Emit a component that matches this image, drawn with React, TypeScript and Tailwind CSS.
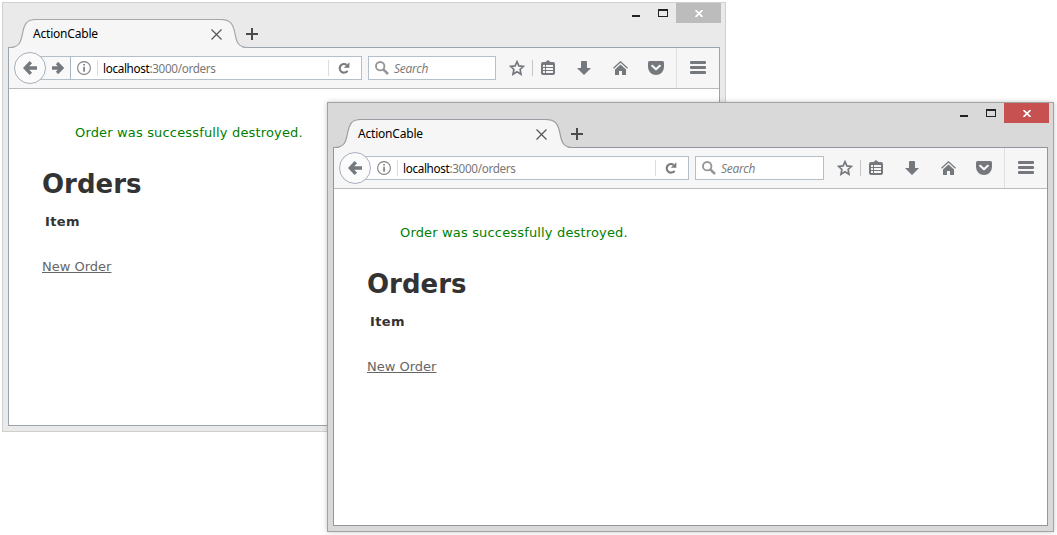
import React from "react";
import { clsx } from "clsx";

const NewTabIcon = () => (
  <svg width="12" height="12" viewBox="0 0 12 12" className="shrink-0" fill="none" stroke="#4a4a4a" strokeWidth="2">
    <path d="M6 0V12M0 6H12" />
  </svg>
);

const BackIcon = () => (
  <svg width="14" height="14" viewBox="0 0 14 14" fill="none" stroke="#75797e" strokeWidth="3.4">
    <path d="M7.8 1.2L2.3 7L7.8 12.8M2.5 7H14" />
  </svg>
);

const ForwardIcon = () => (
  <svg width="12" height="12" viewBox="0 0 12 12" fill="none" stroke="#75797e" strokeWidth="3.3">
    <path d="M5 1L10 6L5 11M0 6H10" />
  </svg>
);

const InfoIcon = () => (
  <svg width="14" height="14" viewBox="0 0 14 14" className="shrink-0">
    <circle cx="7" cy="7" r="6.4" fill="none" stroke="#808080" strokeWidth="1.1" />
    <path d="M6.2 3h1.7v1.6H6.2zM6.2 5.8h1.7v5H6.2z" fill="#808080" />
  </svg>
);

const ReloadIcon = () => (
  <svg width="12" height="12" viewBox="0 0 12 12" className="shrink-0">
    <path d="M8.6 2.9A4.3 4.3 0 1 0 9.5 8.8" fill="none" stroke="#7b7b7b" strokeWidth="2.1" />
    <path d="M11.4 0.2V5.8H5.8z" fill="#7b7b7b" />
  </svg>
);

const SearchIcon = () => (
  <svg width="14" height="14" viewBox="0 0 14 14" className="shrink-0" fill="none" stroke="#969696">
    <circle cx="5.2" cy="5.2" r="4.2" strokeWidth="1.9" />
    <path d="M8.3 8.3L13 13" strokeWidth="2.5" />
  </svg>
);

const StarIcon = () => (
  <svg width="16" height="16" viewBox="0 0 16 16" fill="none" stroke="#75797e" strokeWidth="1.7" strokeLinejoin="miter">
    <path d="M8 1.7L9.9 5.9L14.4 6.4L11.1 9.5L12 14.2L8 11.8L4 14.2L4.900 9.5L1.600 6.4L6.100 5.9Z" />
  </svg>
);

const ListIcon = () => (
  <svg width="14" height="15" viewBox="0 0 14 15">
    <path d="M2 2H4.5L7 0L9.5 2H12Q14 2 14 4V13Q14 15 12 15H2Q0 15 0 13V4Q0 2 2 2Z" fill="#75797e" />
    <path d="M2 5H4V7H2zM5 5H12V7H5zM2 8H4V10H2zM5 8H12V10H5zM2 11H4V13H2zM5 11H12V13H5z" fill="#f6f6f6" />
  </svg>
);

const DownloadIcon = () => (
  <svg width="14" height="14" viewBox="0 0 14 14">
    <path d="M4 1Q4 0 5 0H9Q10 0 10 1V7H14L7 14L0 7H4Z" fill="#75797e" />
  </svg>
);

const HomeIcon = () => (
  <svg width="15" height="14" viewBox="0 0 15 14">
    <path d="M0.5 7.3L7.5 0.8L14.5 7.3" fill="none" stroke="#75797e" strokeWidth="1.3" />
    <path d="M7.500 3.4L13 8.500V14H9V10H6V14H2V8.500Z" fill="#75797e" />
  </svg>
);

const PocketIcon = () => (
  <svg width="16" height="14" viewBox="0 0 16 14">
    <path d="M1.5 0H14.5Q16 0 16 1.5V6A8 8 0 0 1 0 6V1.5Q0 0 1.5 0Z" fill="#75797e" />
    <path d="M4.2 4.8L8 8.3L11.8 4.8" fill="none" stroke="#f6f6f6" strokeWidth="2.2" strokeLinecap="round" strokeLinejoin="round" />
  </svg>
);

const MenuIcon = () => (
  <svg width="16" height="13" viewBox="0 0 16 13" fill="#75797e">
    <rect width="16" height="3" rx="1" />
    <rect y="5" width="16" height="3" rx="1" />
    <rect y="10" width="16" height="3" rx="1" />
  </svg>
);

function TitleBar({ active }: { active: boolean }) {
  return (
    <div className="flex h-[45px] items-end">
      <div className="relative h-[29px] w-[235px] shrink-0">
        <svg width="240" height="29" viewBox="0 0 240 29" className="absolute left-0 top-0">
          <path
            d="M3 29C12 28.500 13 22 14.500 14.500C16.500 4 19 0 28 0H212C221 0 224.500 4 226.500 14.500C228 22 229 28.500 238 29Z"
            fill="#f6f6f6"
          />
          <path
            d="M1 28.500C12 28.500 13 22 14.500 14.500C16.500 4 19 0.500 28 0.500H212C222 0.500 225 4 227 14.500C228.500 22 229.500 28.500 240 28.500"
            fill="none"
            stroke={active ? "#9a9da3" : "#a4a7ac"}
            strokeWidth="1.2"
          />
        </svg>
        <div className="relative flex h-[30px] items-center pl-[25px] pr-[21px] font-['Noto_Sans'] text-[12px] tracking-[-0.2px] text-black">
          <span>ActionCable</span>
          <svg width="11" height="11" viewBox="0 0 11 11" className="ml-auto shrink-0" stroke="#555" strokeWidth="1.2">
            <path d="M0.500 0.500L10.500 10.500M10.500 0.500L0.500 10.500" />
          </svg>
        </div>
      </div>
      <div className="mb-[8px] ml-[3px] flex">
        <NewTabIcon />
      </div>
      <div className="-mr-px ml-auto flex self-start">
        <svg width="44" height="20" viewBox="0 0 44 20" shapeRendering="crispEdges">
          <path d="M0 12H8V14H0Z" fill="#222" />
          <path d="M26 6H36V14H26ZM27 8V13H35V8Z" fill="#222" fillRule="evenodd" />
        </svg>
        <div className={clsx("flex h-5 w-[45px] items-center justify-center", active ? "bg-[#c75050]" : "bg-[#bcbcbc]")}>
          <svg width="8" height="7" viewBox="0 0 8 7" stroke="#fff" strokeWidth="1.7">
            <path d="M0.500 0L7.500 7M7.500 0L0.500 7" />
          </svg>
        </div>
      </div>
    </div>
  );
}

function Toolbar({ active }: { active: boolean }) {
  return (
    <div className="flex h-[41px] items-center border-b border-[#bcbcbc] bg-[#f6f6f6] pl-[5px]">
      <div className="z-10 flex size-8 shrink-0 items-center justify-center rounded-full border border-[#a6b0bd] bg-[#fbfbfb]">
        <BackIcon />
      </div>
      <div className="-ml-[6px] flex h-6 grow items-center border border-l-0 border-[#b5bfca] bg-white font-['Noto_Sans'] text-[12px] text-[#777]">
        {!active && (
          <div className="flex h-[22px] w-[31px] items-center justify-end border-r border-[#a9b4c4] bg-[#f8f8f8] pr-[6px]">
            <ForwardIcon />
          </div>
        )}
        <div className={clsx("flex items-center", active ? "pl-[12px]" : "pl-[6px]")}>
          <InfoIcon />
          <div className="mr-[5px] ml-[6px] h-4 w-px bg-[#dcdcdc]" />
          <span className="pt-[2px] text-[11.7px] tracking-[-0.330px]">
            <span className="text-black">localhost</span>:3000/orders
          </span>
        </div>
        <div className="mr-[9px] ml-auto h-4 w-px bg-[#dcdcdc]" />
        <div className="mr-[11px] flex">
          <ReloadIcon />
        </div>
      </div>
      <div
        className={clsx(
          "ml-[6px] flex h-6 shrink-0 items-center gap-[5px] border border-[#b5bfca] bg-white pl-[6px] font-['Open_Sans'] text-[12px] tracking-[-0.300px] text-[#777] italic",
          active ? "w-[129px]" : "w-[128px]",
        )}
      >
        <SearchIcon />
        <span className="pt-[2px]">Search</span>
      </div>
      <div className="flex h-full w-[223px] shrink-0 items-center pl-[13px]">
        <StarIcon />
        <div className="mr-[8px] ml-[7px] h-4 w-px bg-[#c4c4c4]" />
        <div className="-mt-px"><ListIcon /></div>
        <div className="ml-[22px]"><DownloadIcon /></div>
        <div className="ml-[22px]"><HomeIcon /></div>
        <div className="ml-[20px]"><PocketIcon /></div>
        <div className="ml-[12px] h-full w-px bg-[#dfdfdf]" />
        <div className="ml-[13px] -mt-px"><MenuIcon /></div>
      </div>
    </div>
  );
}

function BrowserWindow({ active = false }: { active?: boolean }) {
  return (
    <div
      className={clsx(
        "flex h-[430px] flex-col border",
        active
          ? "w-[727px] border-[#a2a2a2] bg-[#d9d9d9] shadow-[0_0_5px_rgba(0,0,0,0.22)]"
          : "w-[724px] border-[#d0d0d0] bg-[#eaeaea]",
      )}
    >
      <div className="z-10 -mb-px">
        <div className="px-[5px]">
          <TitleBar active={active} />
        </div>
      </div>
      <div
        className={clsx(
          "mx-[5px] mb-[5px] flex grow flex-col border bg-white",
          active ? "border-[#92979f]" : "border-[#9ba3ad]",
        )}
      >
        <Toolbar active={active} />
        <main className="pt-[35px] pl-[33px] font-['DejaVu_Sans'] text-[13px] leading-[18px] text-[#333]">
          <p className="pl-[33px] tracking-[0.160px] text-[green]">Order was successfully destroyed.</p>
          <h1 className="mt-[24px] text-[26px] leading-9 font-bold">Orders</h1>
          <table className="mt-[11px]">
            <thead>
              <tr>
                <th className="px-[3px] font-bold tracking-[0.4px]">Item</th>
              </tr>
            </thead>
          </table>
          <a className="mt-[27px] inline-block text-[#666] underline">New Order</a>
        </main>
      </div>
    </div>
  );
}

export default function App() {
  return (
    <div className="relative h-[535px] w-[1057px] overflow-hidden bg-white">
      <div className="absolute top-[2px] left-[2px]">
        <BrowserWindow />
      </div>
      <div className="absolute top-[102px] left-[327px]">
        <BrowserWindow active />
      </div>
    </div>
  );
}
